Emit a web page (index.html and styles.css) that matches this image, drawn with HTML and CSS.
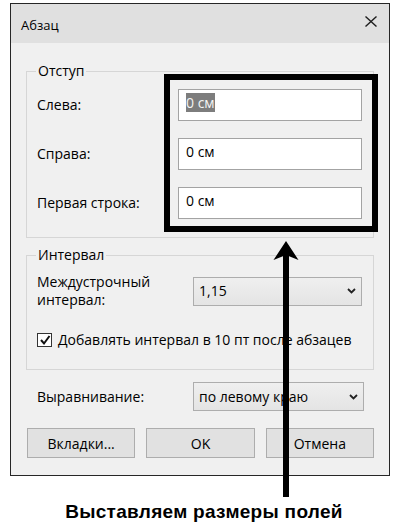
FILE: index.html
```html
<html>
<head>
    <title>Абзац</title>
    <link rel="stylesheet" href="styles.css">
</head>
<body>
    <div class="figure">
        <div class="dialog">
            <div class="titleBar">
                <span class="title">Абзац</span>
                <svg class="closeIcon" width="12" height="11" viewBox="0 0 12 11">
                    <path d="M0.5 0.5 L11.5 10.5 M11.5 0.5 L0.5 10.5" stroke="#1e1e1e" stroke-width="1.4" fill="none"/>
                </svg>
            </div>

            <fieldset class="group indentGroup">
                <legend>Отступ</legend>
                <div class="row">
                    <label>Слева:</label>
                    <div class="field"><span class="selected">0 см</span></div>
                </div>
                <div class="row">
                    <label>Справа:</label>
                    <div class="field"><span>0 см</span></div>
                </div>
                <div class="row">
                    <label>Первая строка:</label>
                    <div class="field"><span>0 см</span></div>
                </div>
            </fieldset>

            <fieldset class="group spacingGroup">
                <legend>Интервал</legend>
                <div class="row wideRow">
                    <label>Междустрочный<br>интервал:</label>
                    <div class="combo">
                        <span>1,15</span>
                        <svg width="9" height="6" viewBox="0 0 9 6"><path d="M1 1 L4.5 4.5 L8 1" stroke="#222" stroke-width="1.8" fill="none"/></svg>
                    </div>
                </div>
                <div class="checkRow">
                    <span class="checkbox">
                        <svg width="12" height="12" viewBox="0 0 12 12"><path d="M2 6 L5 9.5 L10.5 2" stroke="#111" stroke-width="2" fill="none"/></svg>
                    </span>
                    <span>Добавлять интервал в 10 пт после абзацев</span>
                </div>
            </fieldset>

            <div class="row wideRow alignRow">
                <label>Выравнивание:</label>
                <div class="combo">
                    <span>по левому краю</span>
                    <svg width="9" height="6" viewBox="0 0 9 6"><path d="M1 1 L4.5 4.5 L8 1" stroke="#222" stroke-width="1.8" fill="none"/></svg>
                </div>
            </div>

            <div class="buttons">
                <button>Вкладки...</button>
                <button>OK</button>
                <button>Отмена</button>
            </div>
        </div>

        <div class="highlight"></div>
        <svg class="arrow" width="26" height="256" viewBox="0 0 26 256">
            <path d="M13 0 L25.5 19 L13 14 L0.5 19 Z" fill="#000"/>
            <rect x="10" y="12" width="6" height="244" fill="#000"/>
        </svg>

        <p class="caption">Выставляем размеры полей</p>
    </div>
</body>
</html>
```

FILE: styles.css
```css
body {
    margin: 0;
    background-color: white;
    font-family: "Open Sans", "Noto Sans", sans-serif;
    font-size: 14px;
    color: black;
}
.figure {
    position: relative;
    width: 398px;
    height: 529px;
    overflow: hidden;
}
.dialog {
    margin: 3px 0 0 10px;
    width: 380px;
    box-sizing: border-box;
    border: 1px solid #262626;
    background-color: #f0f0f0;
}
.titleBar {
    height: 39px;
    box-sizing: border-box;
    background-color: #e0e0e0;
    display: flex;
    justify-content: space-between;
    align-items: flex-start;
    padding: 11px 12px 0 10px;
}
.title {
    font-size: 13px;
    line-height: 20px;
}
.closeIcon {
    margin-top: 1px;
}
.group {
    margin: 20px 15px 0 15px;
    padding: 10px 11px 18px 10px;
    border: 1px solid #d6d6d6;
    min-width: 0;
}
.group legend {
    padding: 0 2px;
    margin-left: -1px;
    line-height: 16px;
}
.row {
    display: grid;
    grid-template-columns: 141px 1fr;
    align-items: center;
    line-height: 18px;
}
.indentGroup .row + .row {
    margin-top: 17px;
}
.field {
    height: 32px;
    box-sizing: border-box;
    border: 1px solid #a3a3a3;
    background-color: white;
    padding: 3px 7px 0 7px;
}
.field span {
    display: inline-block;
    line-height: 19px;
}
.field .selected {
    background-color: #7d7d7d;
    color: #f4f4f4;
}
.spacingGroup {
    margin-top: 9px;
    padding-bottom: 20px;
}
.wideRow {
    grid-template-columns: 156px 1fr;
}
.combo {
    height: 29px;
    box-sizing: border-box;
    border: 1px solid #adadad;
    background: linear-gradient(#efefef, #e4e4e4);
    display: flex;
    justify-content: space-between;
    align-items: center;
    padding: 0 5px 0 5px;
}
.checkRow {
    display: flex;
    align-items: center;
    margin-top: 22px;
    line-height: 18px;
}
.checkbox {
    width: 15px;
    height: 14px;
    box-sizing: border-box;
    border: 1px solid #333;
    background-color: white;
    margin-right: 6px;
    display: flex;
    align-items: center;
    justify-content: center;
}
.alignRow {
    margin: 12px 25px 0 26px;
}
.buttons {
    display: flex;
    gap: 11px;
    margin: 17px 15px 0 16px;
    padding-bottom: 17px;
}
.buttons button {
    flex: 1;
    height: 30px;
    border: 1px solid #adadad;
    background-color: #e1e1e1;
    font-family: "Open Sans", "Noto Sans", sans-serif;
    font-size: 14px;
    color: black;
    padding: 0;
}
.highlight {
    position: absolute;
    left: 164px;
    top: 74px;
    width: 214px;
    height: 158px;
    box-sizing: border-box;
    border: 6px solid black;
}
.arrow {
    position: absolute;
    left: 273px;
    top: 241px;
}
.caption {
    margin: 26px 0 0 10px;
    text-align: center;
    font-family: "Liberation Sans", Arial, sans-serif;
    font-weight: bold;
    font-size: 19px;
    letter-spacing: 0.3px;
    line-height: 20px;
}
```
